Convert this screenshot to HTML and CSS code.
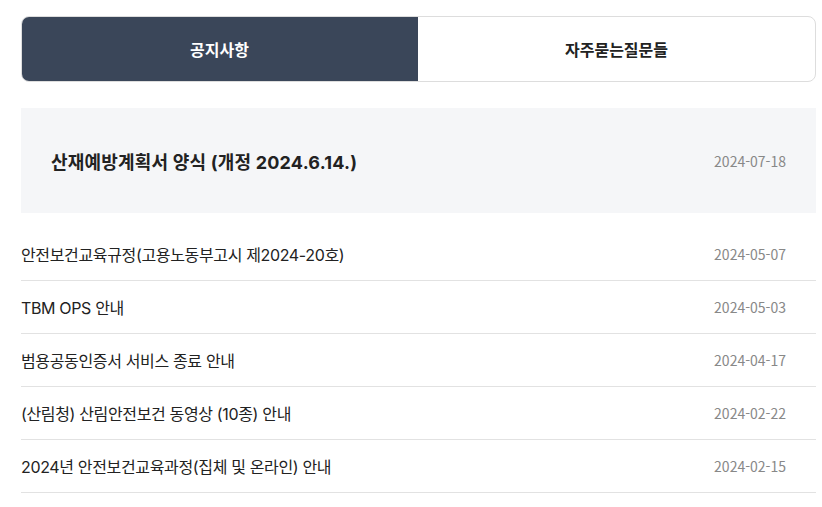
FILE: index.html
```html
<!DOCTYPE html>
<html lang="ko">
<head>
<meta charset="utf-8">
<link rel="stylesheet" href="styles.css">
</head>
<body>
<div class="wrap">
  <div class="tabs">
    <div class="tab active">공지사항</div>
    <div class="tab">자주묻는질문들</div>
  </div>
  <div class="featured">
    <span class="ftitle">산재예방계획서 양식 (개정 2024.6.14.)</span>
    <span class="date">2024-07-18</span>
  </div>
  <ul class="list">
    <li class="row"><span class="title">안전보건교육규정(고용노동부고시 제2024-20호)</span><span class="date">2024-05-07</span></li>
    <li class="row"><span class="title">TBM OPS 안내</span><span class="date">2024-05-03</span></li>
    <li class="row"><span class="title">범용공동인증서 서비스 종료 안내</span><span class="date">2024-04-17</span></li>
    <li class="row"><span class="title">(산림청) 산림안전보건 동영상 (10종) 안내</span><span class="date">2024-02-22</span></li>
    <li class="row"><span class="title">2024년 안전보건교육과정(집체 및 온라인) 안내</span><span class="date">2024-02-15</span></li>
  </ul>
</div>
</body>
</html>
```
FILE: styles.css
```css
* { box-sizing: border-box; }
body {
  margin: 0;
  background: #fff;
  font-family: "Inter", "Noto Sans CJK KR", sans-serif;
  color: #222;
}
.wrap {
  padding: 16px 6px 0 21px;
}
.tabs {
  display: flex;
  height: 66px;
  border: 1px solid #dddddd;
  border-radius: 8px;
  overflow: hidden;
}
.tab {
  flex: 1;
  display: flex;
  align-items: center;
  justify-content: center;
  font-size: 16px;
  font-weight: 700;
  color: #222;
}
.tab.active {
  background: #3a4659;
  color: #fff;
  margin: -1px 0 -1px -1px;
}
.featured {
  margin-top: 26px;
  height: 105px;
  background: #f5f6f8;
  display: flex;
  align-items: center;
  justify-content: space-between;
  padding: 0 30px;
}
.ftitle {
  font-size: 18px;
  font-weight: 700;
  letter-spacing: 0.2px;
  color: #222;
}
.date {
  font-family: "Noto Sans CJK KR", "Noto Sans", sans-serif;
  font-size: 14px;
  color: #888;
}
.list {
  list-style: none;
  margin: 15px 0 0;
  padding: 0;
}
.row {
  height: 53px;
  border-bottom: 1px solid #e2e2e2;
  display: flex;
  align-items: center;
  justify-content: space-between;
  padding: 0 30px 0 0;
}
.title {
  font-size: 16px;
  letter-spacing: -0.35px;
  color: #222;
}
```
